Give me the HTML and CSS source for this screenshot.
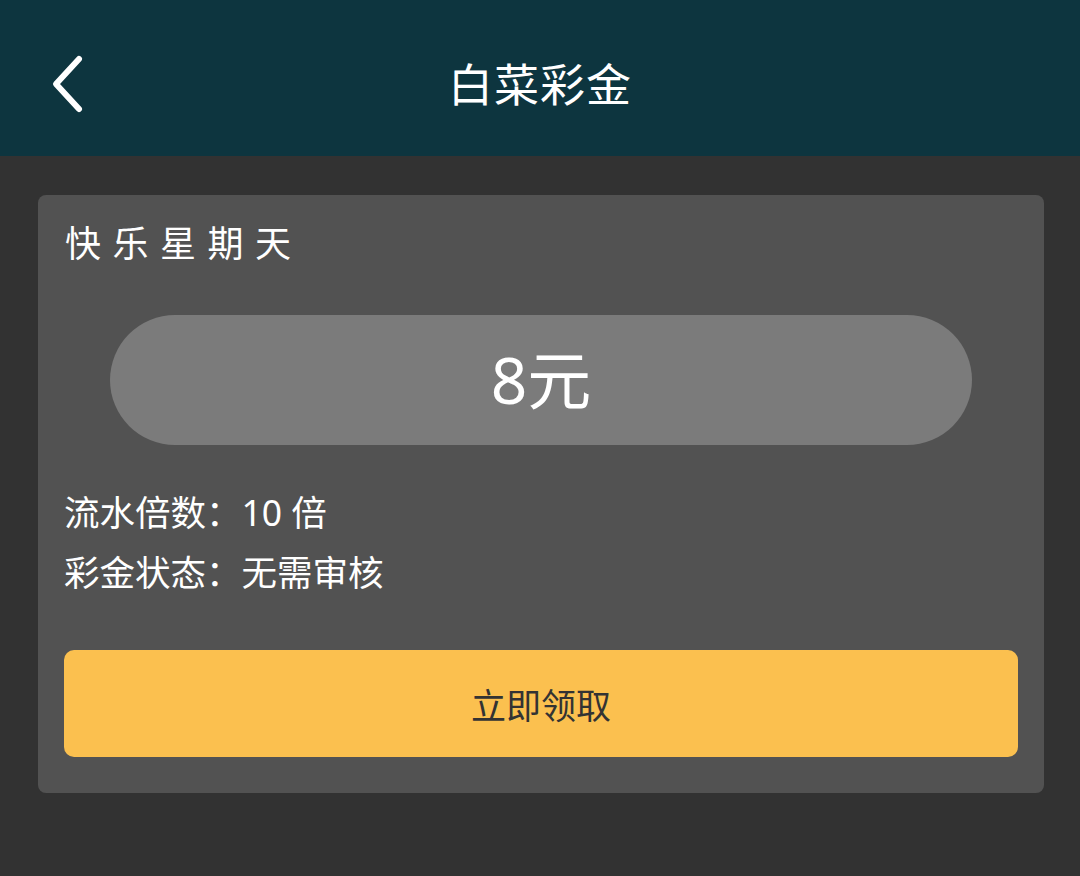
FILE: index.html
```html
<!DOCTYPE html>
<html lang="zh-CN">
<head>
<meta charset="utf-8">
<title>白菜彩金</title>
<link rel="stylesheet" href="styles.css">
</head>
<body>
<header class="topbar">
  <button class="back" aria-label="返回">
    <svg width="40" height="60" viewBox="0 0 40 60"><path d="M31 5 L8 30 L31 55" fill="none" stroke="#ffffff" stroke-width="6" stroke-linecap="round" stroke-linejoin="round"/></svg>
  </button>
  <h1 class="title">白菜彩金</h1>
</header>
<main class="content">
  <section class="card">
    <h2 class="card-title">快乐星期天</h2>
    <div class="amount">8元</div>
    <div class="info">
      <p class="info-line">流水倍数：10 倍</p>
      <p class="info-line">彩金状态：无需审核</p>
    </div>
    <button class="claim">立即领取</button>
  </section>
</main>
</body>
</html>
```
FILE: styles.css
```css
html, body {
  margin: 0;
  padding: 0;
}
body {
  background: #323232;
  font-family: "Noto Sans", "Noto Sans CJK SC", sans-serif;
  color: #ffffff;
  width: 1080px;
  height: 876px;
  overflow: hidden;
}
.topbar {
  height: 156px;
  background: #0d353f;
  display: flex;
  align-items: center;
  justify-content: center;
  position: relative;
}
.back {
  position: absolute;
  left: 48px;
  top: 54px;
  background: none;
  border: 0;
  padding: 0;
  width: 40px;
  height: 60px;
  display: flex;
}
.title {
  margin: 0;
  font-size: 45px;
  font-weight: 400;
  line-height: 1;
  padding-top: 12px;
  letter-spacing: 1px;
}
.content {
  padding: 39px 36px 0 38px;
}
.card {
  background: #525252;
  border-radius: 8px;
  padding: 24px 26px 36px 26px;
  display: flex;
  flex-direction: column;
}
.card-title {
  margin: 0;
  font-size: 36px;
  font-weight: 400;
  letter-spacing: 11.5px;
  line-height: 50px;
  padding-left: 1px;
}
.amount {
  margin: 46px 46px 0 46px;
  height: 130px;
  border-radius: 65px;
  background: #7b7b7b;
  display: flex;
  align-items: center;
  justify-content: center;
  font-size: 64px;
  line-height: 1;
}
.info {
  margin-top: 37px;
  display: flex;
  flex-direction: column;
}
.info-line {
  margin: 0;
  font-size: 35.5px;
  line-height: 60px;
}
.claim {
  margin-top: 48px;
  height: 107px;
  border: 0;
  border-radius: 10px;
  background: #fbc04f;
  color: #333333;
  font-family: "Noto Sans", "Noto Sans CJK SC", sans-serif;
  font-size: 35px;
  padding: 0;
}
```
